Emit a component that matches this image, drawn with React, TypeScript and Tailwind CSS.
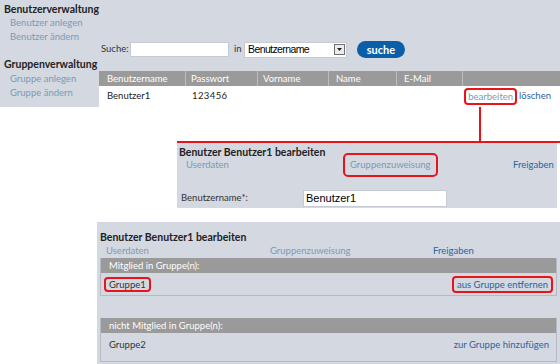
import React from "react";

const font = { fontFamily: "Lato, 'Open Sans', sans-serif" };
const arial = { fontFamily: "'Liberation Sans', Arial, sans-serif" };

const SideLink = ({ children }: { children: React.ReactNode }) => (
  <div className="pl-[10px] text-[#7d9ab4] h-[14px] leading-[14px]">{children}</div>
);

const Tabs = ({ boxed }: { boxed?: boolean }) => (
  <div className="flex items-center h-[13px] leading-[12px]">
    <div className="w-[173px] pl-[9px] text-[#7d9ab4]">Userdaten</div>
    <div className="w-[163px] text-[#7d9ab4]">
      {boxed ? (
        <span className="inline-block border-2 border-[#e8141c] rounded-[5px] px-[5px] py-[4px] -ml-[7px] -my-[6px]">
          Gruppenzuweisung
        </span>
      ) : (
        "Gruppenzuweisung"
      )}
    </div>
    <div className="text-[#2a64a0]">Freigaben</div>
  </div>
);

const GroupBox = ({
  title,
  name,
  action,
  boxed,
  rowH,
}: {
  title: string;
  name: string;
  action: string;
  boxed?: boolean;
  rowH: string;
}) => (
  <div className="ml-[3px] mr-[3px] border border-[#b5bac4] border-t-0">
    <div className="bg-[#9a9a9a] text-white h-[15px] leading-[15px] pl-[8px]">{title}</div>
    <div className={`flex justify-between ${rowH} pl-[3px] pr-[3px]`}>
      {boxed ? (
        <span className="border-2 border-[#e8141c] rounded-[4px] px-[3px] leading-[11px] text-[#333]">
          {name}
        </span>
      ) : (
        <span className="pl-[5px] text-[#333] leading-[12px]">{name}</span>
      )}
      {boxed ? (
        <span className="border-2 border-[#e8141c] rounded-[4px] px-[3px] leading-[13px] text-[#2a64a0]">
          {action}
        </span>
      ) : (
        <span className="pr-[4px] text-[#2a64a0] leading-[12px]">{action}</span>
      )}
    </div>
  </div>
);

const cols = [
  { label: "Benutzername", w: "w-[87px]", pl: "pl-[8px]" },
  { label: "Passwort", w: "w-[72px]", pl: "pl-[5px]" },
  { label: "Vorname", w: "w-[71px]", pl: "pl-[5px]" },
  { label: "Name", w: "w-[68px]", pl: "pl-[7px]" },
  { label: "E-Mail", w: "w-[66px]", pl: "pl-[7px]" },
];

export default function App() {
  return (
    <div className="w-[560px] h-[364px] overflow-hidden bg-white text-[9.5px] text-[#222]" style={font}>
      <div className="flex bg-[#d3d8e1]">
        <div className="w-[99px] shrink-0 pt-[2px]">
          <div className="pl-[4px] font-bold text-[10.5px] text-[#222] h-[14px] leading-[14px]">Benutzerverwaltung</div>
          <SideLink>Benutzer anlegen</SideLink>
          <SideLink>Benutzer ändern</SideLink>
          <div className="pl-[4px] mt-[13px] font-bold text-[10.5px] text-[#222] h-[14px] leading-[14px]">
            Gruppenverwaltung
          </div>
          <div className="h-[1px]" />
          <SideLink>Gruppe anlegen</SideLink>
          <SideLink>Gruppe ändern</SideLink>
        </div>
        <div className="flex-1 flex flex-col">
          <div className="h-[71px] pt-[41px] pl-[2px]">
            <div className="flex items-center h-[17px]">
              <span className="w-[29px] text-[#333]">Suche:</span>
              <div className="w-[99px] h-[15px] bg-white border border-[#c6cad2]" />
              <span className="ml-[5px] w-[10px] text-[#333]">in</span>
              <div
                className="w-[103px] h-[16px] bg-white border border-[#c6cad2] flex items-center justify-between text-[10.5px] text-black pl-[3px] pr-[1px]"
                style={arial}
              >
                <span className="tracking-[-0.6px]">Benutzername</span>
                <span className="w-[11px] h-[11px] border border-[#6f6f6f] bg-[#ececec] flex items-center justify-center">
                  <svg width="5" height="3" viewBox="0 0 5 3">
                    <path d="M0 0h5L2.5 3z" fill="#222" />
                  </svg>
                </span>
              </div>
              <button className="ml-[10px] w-[48px] h-[17px] rounded-full bg-[#0a5fa8] text-white text-[11px] font-bold leading-[17px]">
                suche
              </button>
            </div>
          </div>
          <div className="flex h-[15px] bg-[#9a9a9a] text-white">
            {cols.map((c) => (
              <div key={c.label} className={`${c.w} ${c.pl} leading-[15px] border-r border-[#bdbdbd]`}>
                {c.label}
              </div>
            ))}
          </div>
          <div className="flex items-center h-[21px] bg-white text-[#222]">
            <div className="w-[87px] pl-[8px]">Benutzer1</div>
            <div className="w-[72px] pl-[6px] tracking-[0.4px]">123456</div>
            <div className="flex-1" />
            <span className="border-2 border-[#e8141c] rounded-[4px] px-[2px] leading-[13px] text-[#7d9ab4]">
              bearbeiten
            </span>
            <span className="ml-[2px] mr-[9px] text-[#2a64a0]">löschen</span>
          </div>
        </div>
      </div>

      <div className="relative h-[34px]">
        <div className="absolute left-[479px] top-0 w-[2px] h-[34px] bg-[#e8141c]" />
      </div>

      <div className="ml-[177px] border-t-2 border-[#e8141c]">
        <div className="mr-[3px] h-[65px] bg-[#d3d8e1] pt-[3px]">
          <div className="pl-[2px] font-bold text-[10.5px] text-[#222] h-[12px] leading-[12px]">
            Benutzer Benutzer1 bearbeiten
          </div>
          <Tabs boxed />
          <div className="flex items-center mt-[19px] pl-[4px]">
            <span className="w-[122px] text-[#333]">Benutzername*:</span>
            <div
              className="w-[144px] h-[17px] bg-white border border-[#c6cad2] text-[11px] text-black pl-[2px] leading-[15px]"
              style={arial}
            >
              Benutzer1
            </div>
          </div>
        </div>
      </div>

      <div className="ml-[97px] mt-[14px] bg-[#d3d8e1] h-[150px] pt-[9px]">
        <div className="pl-[3px] font-bold text-[10.5px] text-[#222] h-[12px] leading-[12px]">
          Benutzer Benutzer1 bearbeiten
        </div>
        <div className="mt-[1px]">
          <Tabs />
        </div>
        <div className="h-[1px]" />
        <GroupBox title="Mitglied in Gruppe(n):" name="Gruppe1" action="aus Gruppe entfernen" boxed rowH="h-[22px] items-center" />
        <div className="h-[22px]" />
        <GroupBox title="nicht Mitglied in Gruppe(n):" name="Gruppe2" action="zur Gruppe hinzufügen" rowH="h-[28px] items-start pt-[6px]" />
      </div>
    </div>
  );
}
